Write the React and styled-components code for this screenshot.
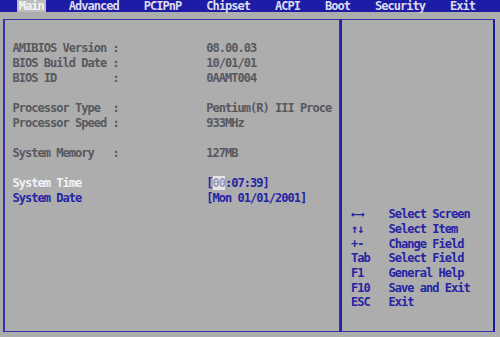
import React from 'react';
import styled, { createGlobalStyle } from "styled-components";

const CELL = 6.25;

const Global = createGlobalStyle`
  html, body {
    margin: 0;
    background: #adadad;
  }
`;

const Screen = styled.div`
  width: 500px;
  height: 337px;
  background: #adadad;
  font-family: "DejaVu Sans Mono", "Liberation Mono", monospace;
  font-weight: bold;
  font-size: 12px;
  letter-spacing: ${CELL - 12 * 0.602}px;
  overflow: hidden;
`;

const MenuBar = styled.div`
  display: flex;
  height: 12px;
  background: #1c1ca6;
  padding-left: ${3 * CELL - 2}px;
  line-height: 12px;
`;

const Tab = styled.div`
  width: ${p => p.cols * CELL}px;
  flex: none;
`;

const TabLabel = styled.span`
  display: inline-block;
  padding: 0 2px 0 2px;
  color: ${p => (p.active ? "#f4f4f4" : "#dcdcec")};
  background: ${p => (p.active ? "#bdbdbd" : "transparent")};
`;

const Body = styled.div`
  display: flex;
  margin: 7px 0 0 3px;
  height: 313px;
`;

const MainPanel = styled.div`
  width: 337px;
  border: 1px solid #3434a4;
  border-left-width: 2px;
  padding: 21px 0 0 ${2 * CELL - 5}px;
  box-sizing: border-box;
`;

const HelpPanel = styled.div`
  width: 155px;
  border: 1px solid #3434a4;
  border-left: 2px solid #2222a0;
  border-right: 2px solid #1a1a9c;
  display: flex;
  flex-direction: column;
  justify-content: flex-end;
  padding: 0 0 21px 9px;
  box-sizing: border-box;
`;

const Row = styled.div`
  display: flex;
  height: 15px;
  line-height: 15px;
  white-space: pre;
  color: ${p => p.color || "#58585f"};
`;

const Gap = styled.div`
  height: 15px;
`;

const Name = styled.span`
  width: ${16 * CELL}px;
  flex: none;
`;

const Colon = styled.span`
  width: ${15 * CELL}px;
  flex: none;
`;

const Value = styled.span`
  color: ${p => p.color || "inherit"};
`;

const Cursor = styled.span`
  background: #e6e6e6;
  color: #9a9ab8;
`;

const HelpRow = styled.div`
  display: flex;
  height: 14.7px;
  line-height: 14.7px;
  color: #2424a4;
  white-space: pre;
`;

const Key = styled.span`
  width: ${6 * CELL}px;
  flex: none;
`;

const tabs = [
  { label: "Main", cols: 8, active: true },
  { label: "Advanced", cols: 12 },
  { label: "PCIPnP", cols: 10 },
  { label: "Chipset", cols: 11 },
  { label: "ACPI", cols: 8 },
  { label: "Boot", cols: 8 },
  { label: "Security", cols: 12 },
  { label: "Exit", cols: 6 },
];

const info = [
  ["AMIBIOS Version", "08.00.03"],
  ["BIOS Build Date", "10/01/01"],
  ["BIOS ID", "0AAMT004"],
  null,
  ["Processor Type", "Pentium(R) III Proce"],
  ["Processor Speed", "933MHz"],
  null,
  ["System Memory", "127MB"],
  null,
];

const help = [
  ["\u2190\u2192", "Select Screen"],
  ["\u2191\u2193", "Select Item"],
  ["+-", "Change Field"],
  ["Tab", "Select Field"],
  ["F1", "General Help"],
  ["F10", "Save and Exit"],
  ["ESC", "Exit"],
];

export default function App() {
  return (
    <Screen>
      <Global />
      <MenuBar>
        {tabs.map(t => (
          <Tab key={t.label} cols={t.cols}>
            <TabLabel active={t.active}>{t.label}</TabLabel>
          </Tab>
        ))}
      </MenuBar>
      <Body>
        <MainPanel>
          {info.map((item, i) =>
            item ? (
              <Row key={i}>
                <Name>{item[0]}</Name>
                <Colon>:</Colon>
                <Value>{item[1]}</Value>
              </Row>
            ) : (
              <Gap key={i} />
            )
          )}
          <Row color="#f2f2f2">
            <Name>System Time</Name>
            <Colon> </Colon>
            <Value color="#2424a4">[<Cursor>00</Cursor>:07:39]</Value>
          </Row>
          <Row color="#2424a4">
            <Name>System Date</Name>
            <Colon> </Colon>
            <Value>[Mon 01/01/2001]</Value>
          </Row>
        </MainPanel>
        <HelpPanel>
          {help.map(([k, a]) => (
            <HelpRow key={k}>
              <Key>{k}</Key>
              <span>{a}</span>
            </HelpRow>
          ))}
        </HelpPanel>
      </Body>
    </Screen>
  );
}
